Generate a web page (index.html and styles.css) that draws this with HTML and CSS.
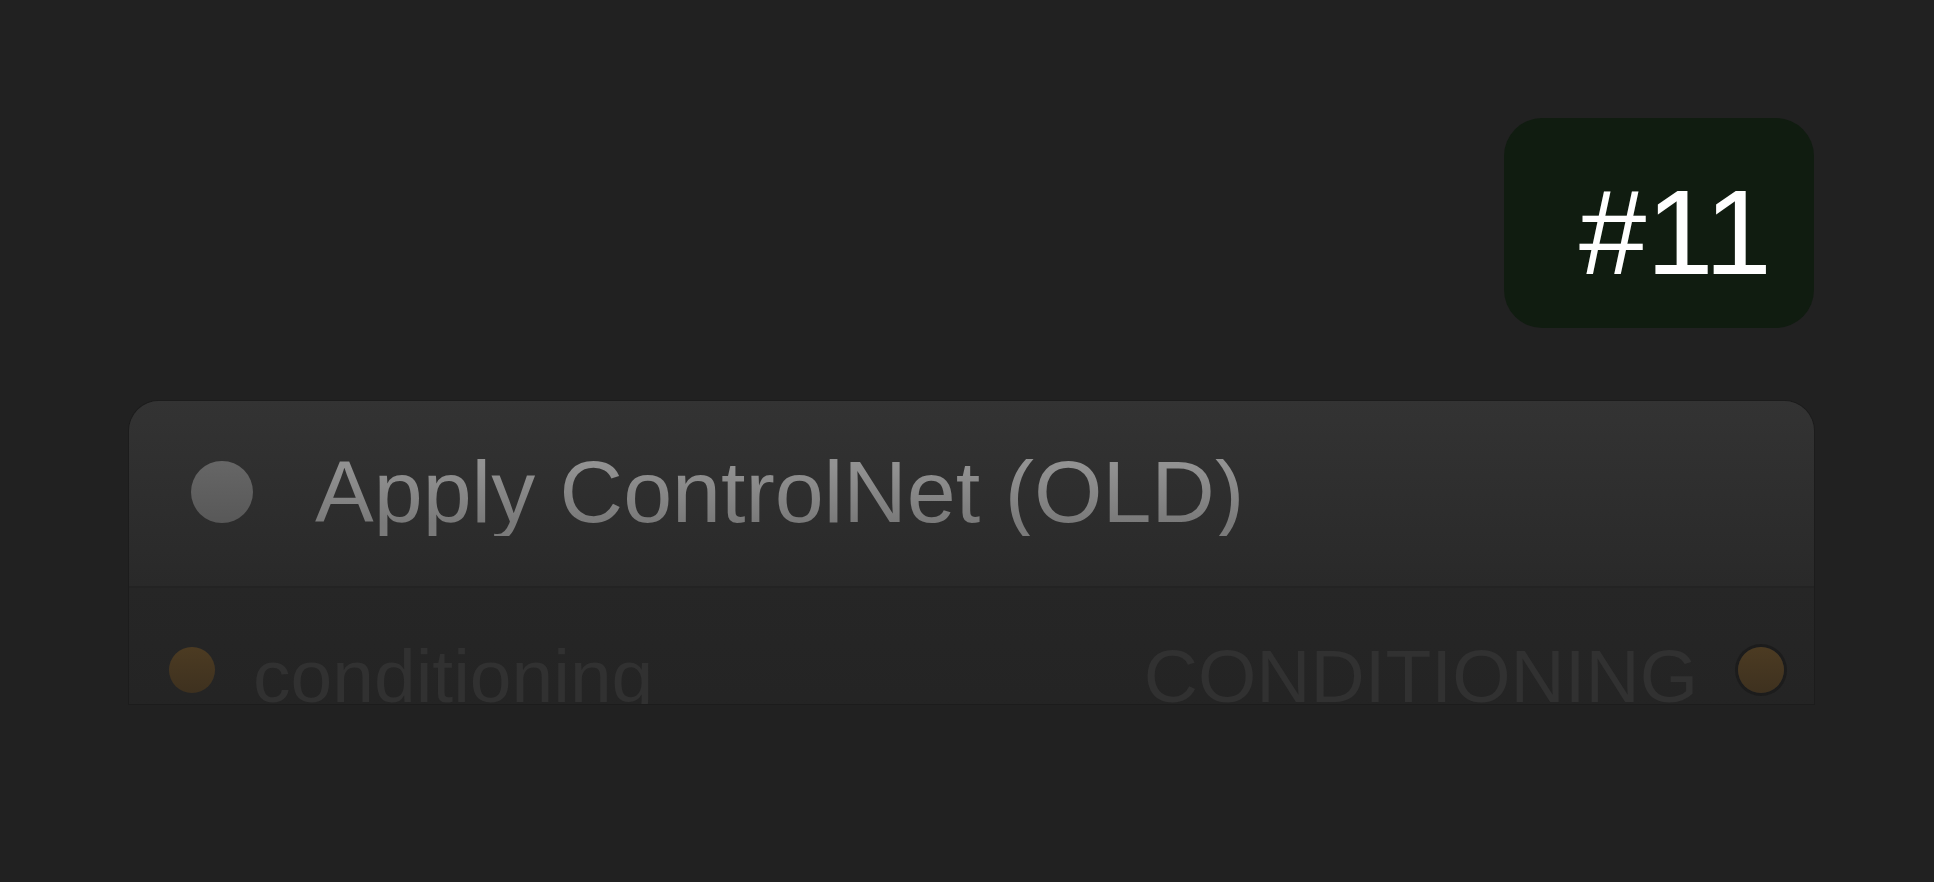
FILE: index.html
```html
<!DOCTYPE html>
<html lang="en">
<head>
<meta charset="utf-8">
<title>Apply ControlNet (OLD)</title>
<link rel="stylesheet" href="styles.css">
</head>
<body>
<div class="canvas">
  <div class="badge-row">
    <div class="badge">#11</div>
  </div>
  <div class="node">
    <div class="node-title">
      <span class="title-dot"></span>
      <span class="title-text">Apply ControlNet (OLD)</span>
    </div>
    <div class="node-body">
      <div class="slot slot-in">
        <span class="slot-dot"></span>
        <span class="slot-label">conditioning</span>
      </div>
      <div class="slot slot-out">
        <span class="slot-label slot-label-out">CONDITIONING</span>
        <span class="slot-dot slot-dot-out"></span>
      </div>
    </div>
  </div>
</div>
</body>
</html>
```

FILE: styles.css
```css
html, body {
  margin: 0;
  padding: 0;
  background: #212121;
  width: 1934px;
  height: 882px;
  overflow: hidden;
  font-family: "Liberation Sans", Arial, Helvetica, sans-serif;
}

.canvas {
  display: flex;
  flex-direction: column;
  padding: 118px 120px 0 129px;
}

.badge-row {
  display: flex;
  justify-content: flex-end;
}

.badge {
  box-sizing: border-box;
  width: 310px;
  height: 210px;
  border-radius: 38px;
  background: #101c10;
  color: #ffffff;
  font-size: 121px;
  line-height: 1;
  display: flex;
  align-items: center;
  padding-left: 75px;
  padding-top: 19px;
}

.node {
  margin-top: 73px;
  height: 303px;
  overflow: hidden;
  border-radius: 30px 30px 0 0;
  background: #252525;
  box-shadow: 0 0 0 1px #1c1c1c;
  display: flex;
  flex-direction: column;
}

.node-title {
  flex: 0 0 187px;
  box-sizing: border-box;
  display: flex;
  align-items: center;
  padding-left: 62px;
  padding-bottom: 4px;
  background: linear-gradient(to bottom, #333333 0%, #2e2e2e 50%, #292929 100%);
  border-bottom: 2px solid #232323;
}

.title-dot {
  width: 62px;
  height: 62px;
  border-radius: 50%;
  background: linear-gradient(to bottom, #666666, #585858);
  flex: 0 0 auto;
  margin-top: 1px;
}

.title-text {
  margin-left: 62px;
  font-size: 88px;
  line-height: 1;
  color: #858585;
  background: linear-gradient(to bottom, #929292 20%, #7a7a7a 85%);
  -webkit-background-clip: text;
  background-clip: text;
  -webkit-text-fill-color: transparent;
  white-space: nowrap;
}

.node-body {
  flex: 0 0 164px;
  display: flex;
  justify-content: space-between;
  align-items: center;
  padding: 0 30px 0 40px;
  background: linear-gradient(to bottom, #262626, #232323);
}

.slot {
  display: flex;
  align-items: center;
}

.slot-dot {
  width: 46px;
  height: 46px;
  border-radius: 50%;
  background: linear-gradient(to bottom, #4c3b22, #3e311f);
  flex: 0 0 auto;
}

.slot-dot-out {
  box-shadow: 0 0 0 3px #1c1c1c;
}

.slot-label {
  font-size: 75px;
  line-height: 1;
  color: #313131;
  margin-top: 12px;
  margin-left: 38px;
  white-space: nowrap;
}

.slot-label-out {
  margin-left: 0;
  margin-right: 40px;
}
```
